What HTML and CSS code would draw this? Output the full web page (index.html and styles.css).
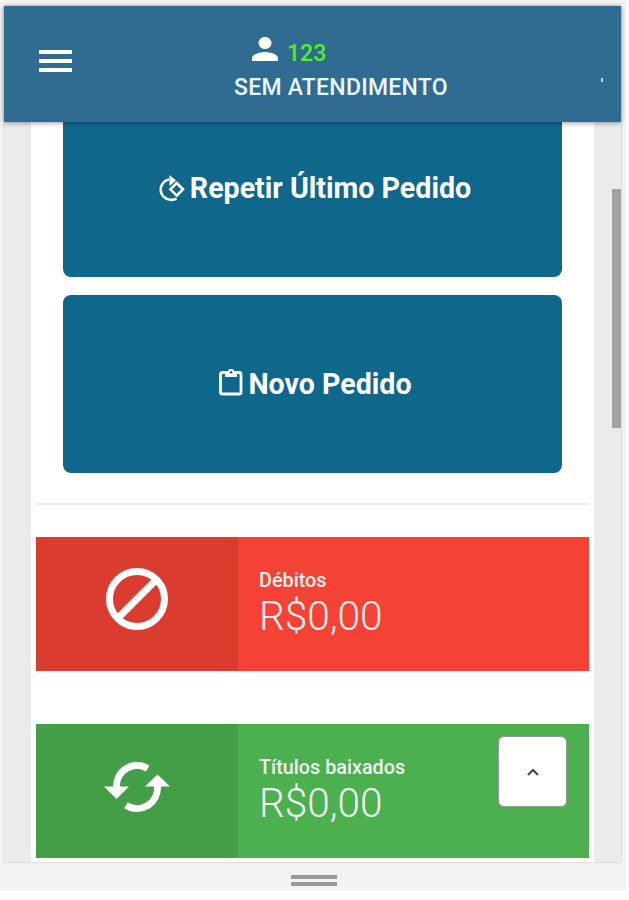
FILE: index.html
```html
<!DOCTYPE html>
<html lang="pt-BR">
<head>
    <meta charset="UTF-8">
    <title>Pedidos</title>
    <link rel="stylesheet" href="styles.css">
</head>
<body>
    <div class="stage">
        <div class="device">
            <header class="topbar">
                <button class="menu-button" aria-label="Menu">
                    <span></span>
                    <span></span>
                    <span></span>
                </button>
                <div class="client">
                    <div class="client-code">
                        <svg class="icon-person" viewBox="4 4 16 16" preserveAspectRatio="none"><path d="M12 12c2.21 0 4-1.79 4-4s-1.79-4-4-4-4 1.79-4 4 1.79 4 4 4zm0 2c-2.67 0-8 1.34-8 4v2h16v-2c0-2.66-5.33-4-8-4z"/></svg>
                        <span>123</span>
                    </div>
                    <div class="client-status">SEM ATENDIMENTO</div>
                </div>
                <span class="tick"></span>
            </header>

            <main class="content">
                <div class="card">
                    <div class="actions">
                        <button class="action action-repeat">
                            <svg class="icon-repeat" viewBox="0 0 27 27">
                                <path d="M10 4.500A10.200 10.200 0 0 0 11 24.700Q14.500 25.200 17.500 23.700M17.700 8L24 14.300L17.700 20.600L11.400 14.300Z"/>
                                <path class="solid" d="M10.500 0L17 5.500L10.500 11Z"/>
                            </svg>
                            <span>Repetir Último Pedido</span>
                        </button>
                        <button class="action action-new">
                            <svg class="icon-clipboard" viewBox="0 0 24 28">
                                <rect x="1.500" y="4.500" width="20.500" height="21.500" rx="1.800"/>
                                <path class="solid" d="M6 3.500H8.500C9 0.200 15 0.200 15.500 3.500H18V9H6Z"/>
                                <circle class="hole" cx="12" cy="4.300" r="1.200"/>
                            </svg>
                            <span>Novo Pedido</span>
                        </button>
                    </div>

                    <hr>

                    <div class="info-box red">
                        <div class="info-icon">
                            <svg class="icon-block" viewBox="0 0 62 62">
                                <circle cx="31" cy="31" r="27.500"/>
                                <path d="M12 50L50 12"/>
                            </svg>
                        </div>
                        <div class="info-text">
                            <p class="label">Débitos</p>
                            <p class="value">R$0,00</p>
                        </div>
                    </div>

                    <div class="info-box green">
                        <div class="info-icon">
                            <svg class="icon-sync" viewBox="0 0 66 50">
                                <path d="M12.500 25A20.500 21 0 0 1 43.800 6.500M53.500 24A20.500 21 0 0 1 22 43.200"/>
                                <path class="solid" d="M0 24.500H25L12.500 37ZM41 24.500H66L53.500 12.500Z"/>
                            </svg>
                        </div>
                        <div class="info-text">
                            <p class="label">Títulos baixados</p>
                            <p class="value">R$0,00</p>
                        </div>
                    </div>
                </div>
            </main>

            <div class="scroll-thumb"></div>
            <button class="to-top" aria-label="Topo">
                <svg viewBox="0 0 12 8"><path d="M1 7L6 2L11 7"/></svg>
            </button>
        </div>
        <div class="handle"></div>
    </div>
</body>
</html>
```
FILE: styles.css
```css
* {
    box-sizing: border-box;
}

body {
    margin: 0;
    height: 900px;
    overflow: hidden;
    background-color: #fff;
    font-family: Roboto, sans-serif;
}

button {
    border: none;
    padding: 0;
    font-family: inherit;
    cursor: pointer;
}

.stage {
    width: 626px;
    height: 890px;
    padding: 6px 5px 0 4px;
    background-color: #f3f3f3;
}

.device {
    position: relative; /* anchors the scroll thumb and the back-to-top button */
    display: flex;
    flex-direction: column;
    height: 856px;
    background-color: #ebebeb;
    box-shadow: 0 0 2px rgba(0, 0, 0, 0.25);
}

/* Top bar */
.topbar {
    display: flex;
    height: 116px;
    flex-shrink: 0;
    padding-left: 35px;
    background-color: #306c91;
    box-shadow: 0 1px 5px rgba(0, 0, 0, 0.4);
    z-index: 1;
}

.menu-button {
    display: flex;
    flex-direction: column;
    gap: 5px;
    width: 33px;
    height: 22px;
    margin-top: 44px;
    background: none;
}

.menu-button span {
    width: 33px;
    height: 4px;
    background-color: #fff;
}

.client {
    width: 216px;
    margin-left: 161px;
    padding-top: 31px;
    color: #e9f5ff;
    font-size: 23px;
    font-weight: 500;
    white-space: nowrap;
}

.client-code {
    display: flex;
    gap: 9px;
    height: 32px;
    padding-left: 19px;
    color: #56ee25;
    line-height: 34px;
}

.icon-person {
    width: 26px;
    height: 24px;
    fill: #fff;
}

.client-status {
    padding-left: 1px;
    letter-spacing: 0.25px;
    line-height: 38px;
}

.tick {
    width: 2px;
    height: 4px;
    margin: 72px 0 0 152px;
    background-color: #a9d6f2;
}

/* Page content */
.content {
    flex: 1;
    min-height: 0;
    padding: 0 27px;
    overflow: hidden;
}

.card {
    height: 100%;
    padding: 0 5.5px 0 5px;
    background-color: #fff;
}

.actions {
    display: flex;
    flex-direction: column;
    gap: 18px;
    padding: 0 26.5px 0 27px;
}

.action {
    display: flex;
    align-items: center;
    justify-content: center;
    height: 178px;
    border-radius: 8px;
    background-color: #0f678c;
    color: #fff;
    font-size: 28.6px;
    font-weight: 700;
    white-space: nowrap;
}

.action-repeat {
    height: 154.5px;
    padding: 0 0 22px 5px;
    border-radius: 0 0 8px 8px;
    gap: 4px;
}

.action-new {
    gap: 5px;
    padding-left: 6px;
}

.action svg {
    fill: none;
    stroke: #fff;
}

.action .solid {
    fill: #fff;
    stroke: none;
}

.icon-repeat {
    width: 27px;
    height: 27px;
    stroke-width: 2.6;
}

.icon-clipboard {
    width: 24px;
    height: 28px;
    margin-bottom: 3px;
    stroke-width: 2.8;
}

.icon-clipboard .hole {
    fill: #0f678c;
    stroke: none;
}

hr {
    height: 2px;
    margin: 30.5px 0 32px;
    border: none;
    background-color: #eee;
}

/* Info boxes */
.info-box {
    display: flex;
    height: 133.5px;
    margin-bottom: 53.5px;
    color: #fff;
}

.info-box.red {
    background-color: #f44336;
}

.info-box.green {
    background-color: #4caf50;
}

.info-icon {
    display: flex;
    justify-content: center;
    width: 202px;
    background-color: rgba(0, 0, 0, 0.1);
}

.info-icon svg {
    fill: none;
    stroke: #fff;
}

.icon-block {
    width: 62px;
    height: 62px;
    margin-top: 31px;
    stroke-width: 7;
}

.icon-sync {
    width: 66px;
    height: 50px;
    margin-top: 37.5px;
    stroke-width: 7;
}

.icon-sync .solid {
    fill: #fff;
    stroke: none;
}

.info-text {
    padding: 31px 0 0 21px;
}

.info-text p {
    margin: 0;
    opacity: 0.92;
}

.info-text .label {
    font-size: 19.8px;
    font-weight: 500;
    line-height: 26px;
}

.info-text .value {
    font-size: 40.6px;
    font-weight: 300;
    line-height: 44px;
}

/* Floating parts */
.scroll-thumb {
    position: absolute;
    top: 183px;
    right: 0;
    width: 9.5px;
    height: 239px;
    background-color: #a2a2a2;
}

.to-top {
    position: absolute;
    right: 54px;
    bottom: 55px;
    display: flex;
    align-items: center;
    justify-content: center;
    width: 69px;
    height: 71px;
    border: 1.5px solid #999;
    border-radius: 6px;
    background-color: #fff;
}

.to-top svg {
    width: 12px;
    height: 8px;
    fill: none;
    stroke: #444;
    stroke-width: 2;
}

.handle {
    width: 46px;
    height: 11px;
    margin: 13px 0 0 287px;
    border: solid #999;
    border-width: 4px 0;
}
```
